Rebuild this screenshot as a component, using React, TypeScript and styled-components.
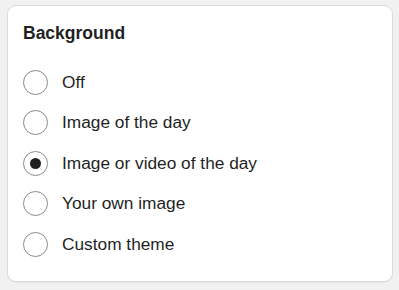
import React, { useState } from "react";
import styled, { createGlobalStyle } from "styled-components";

const Global = createGlobalStyle`
  html, body { margin: 0; padding: 0; background: #f1f1f1; }
  body { font-family: "Liberation Sans", Arial, sans-serif; color: #202124; }
`;

const Page = styled.div`
  padding: 5px 7px;
  width: 399px;
  height: 290px;
  box-sizing: border-box;
`;

const Card = styled.section`
  box-sizing: border-box;
  width: 386px;
  height: 277px;
  background: #fff;
  border: 1px solid #dcdcdc;
  border-radius: 9px;
  box-shadow: 0 1px 1px rgba(0, 0, 0, 0.06);
  padding: 16px 15px 0 15px;
`;

const Title = styled.h2`
  margin: 0 0 26px 0;
  font-size: 17.5px;
  font-weight: 700;
  line-height: 22px;
  color: #1f1f1f;
`;

const List = styled.div`
  display: flex;
  flex-direction: column;
  gap: 16.5px;
`;

const Row = styled.label`
  display: flex;
  align-items: center;
  gap: 14px;
  height: 24px;
  cursor: pointer;
  font-size: 17.3px;
  color: #1f1f1f;
`;

const Circle = styled.span<{ $checked: boolean }>`
  box-sizing: border-box;
  width: 25px;
  height: 25px;
  border-radius: 50%;
  border: 1.5px solid #8a8a8a;
  display: flex;
  align-items: center;
  justify-content: center;
  flex: none;
  &::after {
    content: "";
    width: 11px;
    height: 11px;
    border-radius: 50%;
    background: #1f1f1f;
    display: ${(p) => (p.$checked ? "block" : "none")};
  }
`;

const options = [
  "Off",
  "Image of the day",
  "Image or video of the day",
  "Your own image",
  "Custom theme",
];

export default function App() {
  const [sel, setSel] = useState(2);
  return (
    <Page>
      <Global />
      <Card>
        <Title>Background</Title>
        <List>
          {options.map((o, i) => (
            <Row key={o} onClick={() => setSel(i)}>
              <Circle $checked={sel === i} />
              {o}
            </Row>
          ))}
        </List>
      </Card>
    </Page>
  );
}
